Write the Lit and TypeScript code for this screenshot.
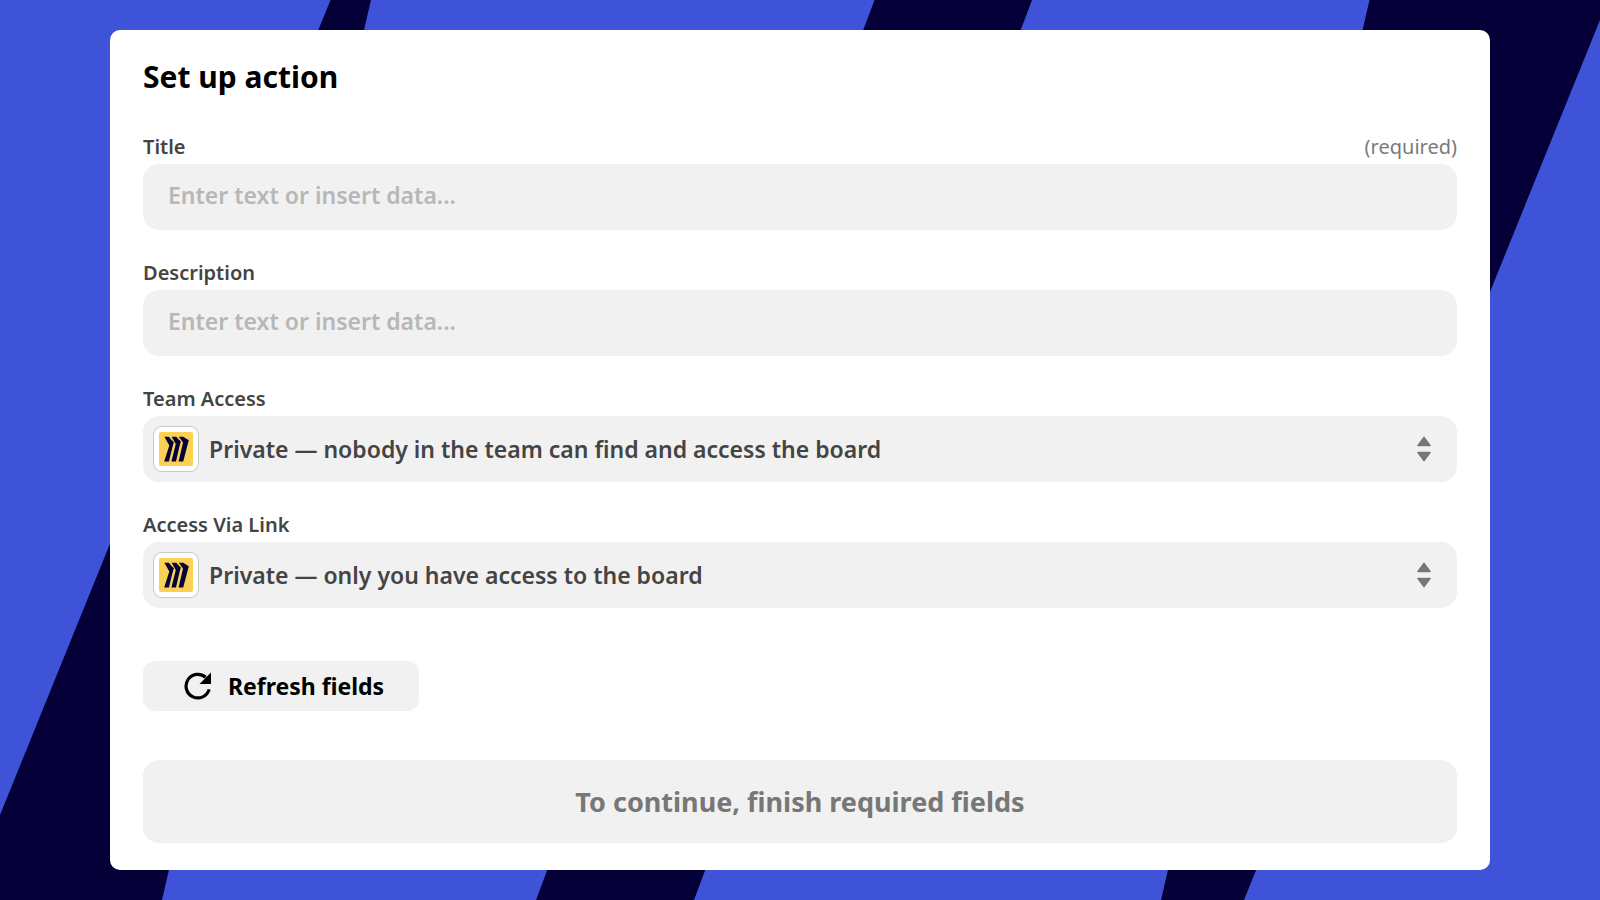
import { LitElement, html, css, svg } from "lit";
import { customElement, property } from "lit/decorators.js";

const appIcon = svg`
  <svg class="app-glyph" viewBox="0 0 34 34" aria-hidden="true">
    <rect width="34" height="34" rx="2" fill="#fad155"></rect>
    <g fill="#050038">
      <path d="M5.4 4.8H9.8L14.6 10.4L9.9 29.4H5.2L10.3 13.6Z"></path>
      <path d="M12.6 4.8H17.2L21.6 9.6L17 29.4H12.4L16.8 12Z"></path>
      <path d="M19.8 4.8H24.2L29.8 8.2L24.2 29.4H19.6L24 10.6Z"></path>
      <path d="M13.2 8.4L14.8 10.2L13 15ZM20.6 8.2L21.8 9.4L20 14Z"></path>
    </g>
  </svg>
`;

@customElement("form-field")
export class FormField extends LitElement {
  static styles = css`
    :host {
      display: block;
    }
    .head {
      display: flex;
      justify-content: space-between;
      font-size: 20px;
      line-height: 28px;
      padding-bottom: 3px;
    }
    .label {
      font-weight: 600;
      color: #444;
    }
    .required {
      color: #7a7a7a;
    }
    .text-input,
    .choice {
      box-sizing: border-box;
      width: 100%;
      height: 66px;
      border: 0;
      border-radius: 16px;
      background: #f1f1f1;
      font: inherit;
      font-size: 23px;
      font-weight: 600;
      color: #444;
    }
    .text-input {
      padding: 0 25px 4px;
    }
    .text-input::placeholder {
      color: #b7b7b7;
      opacity: 1;
    }
    .select-box {
      display: grid;
      grid-template-columns: auto 1fr auto;
      align-items: center;
    }
    .choice {
      grid-area: 1 / 1 / 2 / 4;
      appearance: none;
      padding: 0 60px 1px 66px;
      text-overflow: ellipsis;
    }
    .tile {
      grid-area: 1 / 1;
      box-sizing: border-box;
      display: grid;
      place-items: center;
      width: 46px;
      height: 46px;
      margin-left: 10px;
      border: 1px solid #c8c8c8;
      border-radius: 9px;
      background: #fff;
      pointer-events: none;
    }
    .app-glyph {
      display: block;
      width: 34px;
      height: 34px;
    }
    .arrows {
      grid-area: 1 / 3;
      width: 14px;
      height: 26px;
      margin-right: 26px;
      pointer-events: none;
    }
  `;

  @property() label = "";
  @property() placeholder = "";
  @property({ type: Boolean }) required = false;
  @property({ attribute: false }) options: string[] = [];

  render() {
    return html`
      <div class="head">
        <label class="label" for="control">${this.label}</label>
        ${this.required ? html`<span class="required">(required)</span>` : ""}
      </div>
      ${this.options.length ? this.renderSelect() : this.renderInput()}
    `;
  }

  private renderInput() {
    return html`<input
      class="text-input"
      id="control"
      type="text"
      placeholder=${this.placeholder}
      ?required=${this.required}
    />`;
  }

  private renderSelect() {
    return html`
      <div class="select-box">
        <select class="choice" id="control">
          ${this.options.map((o) => html`<option>${o}</option>`)}
        </select>
        <span class="tile">${appIcon}</span>
        <svg class="arrows" viewBox="0 0 14 26" aria-hidden="true">
          <g fill="#777" stroke="#777" stroke-width="1.6" stroke-linejoin="round">
            <path d="M7 1.4L13 9.4H1Z"></path>
            <path d="M7 24.6L13 16.6H1Z"></path>
          </g>
        </svg>
      </div>
    `;
  }
}

@customElement("app-root")
export class AppRoot extends LitElement {
  static styles = css`
    :host {
      display: grid;
      min-height: 100vh;
      background: #3f53d9;
      font-family: "Noto Sans", "Open Sans", sans-serif;
    }
    .backdrop {
      grid-area: 1 / 1;
      width: 100%;
      height: 100%;
      min-height: 0;
      contain: size;
    }
    .page {
      grid-area: 1 / 1;
      z-index: 1;
      padding: 30px 110px;
    }
    .card {
      display: flex;
      flex-direction: column;
      align-items: stretch;
      padding: 27px 33px;
      border-radius: 10px;
      background: #fff;
    }
    .heading {
      margin: 0 0 36px;
      font-size: 30px;
      line-height: 40px;
      font-weight: 700;
      color: #000;
    }
    .fields {
      display: grid;
      gap: 29px;
    }
    .button {
      border: 0;
      background: #f1f1f1;
      font: inherit;
      font-weight: 700;
    }
    .refresh {
      display: flex;
      align-items: center;
      align-self: flex-start;
      gap: 16px;
      height: 50px;
      margin: 53px 0 49px;
      padding: 0 35px 0 41px;
      border-radius: 12px;
      font-size: 23px;
      color: #000;
    }
    .refresh-icon {
      width: 28px;
      height: 28px;
    }
    .refresh-text {
      padding-bottom: 1px;
    }
    .submit {
      height: 83px;
      border-radius: 16px;
      font-size: 27px;
      color: #777;
    }
  `;

  render() {
    return html`
      <svg class="backdrop" viewBox="0 0 1600 900" preserveAspectRatio="none" aria-hidden="true">
        <g fill="#050038">
          <path d="M330.5 0H371L162 900H0V815Z"></path>
          <path d="M874.5 0H1032L694 900H536Z"></path>
          <path d="M1369.5 0H1600V20L1244 900H1161Z"></path>
        </g>
      </svg>
      <main class="page">
        <form class="card" @submit=${(e: Event) => e.preventDefault()}>
          <h1 class="heading">Set up action</h1>
          <div class="fields">
            <form-field label="Title" placeholder="Enter text or insert data..." required></form-field>
            <form-field label="Description" placeholder="Enter text or insert data..."></form-field>
            <form-field
              label="Team Access"
              .options=${["Private — nobody in the team can find and access the board"]}
            ></form-field>
            <form-field
              label="Access Via Link"
              .options=${["Private — only you have access to the board"]}
            ></form-field>
          </div>
          <button class="button refresh" type="button">
            <svg class="refresh-icon" viewBox="0 0 28 28" aria-hidden="true">
              <path
                d="M25.2 17.4A11.8 11.8 0 1 1 21.6 5.2"
                fill="none"
                stroke="#000"
                stroke-width="3.2"
              ></path>
              <path d="M27 0.5V12H15.5Z"></path>
            </svg>
            <span class="refresh-text">Refresh fields</span>
          </button>
          <button class="button submit" type="submit" disabled>
            To continue, finish required fields
          </button>
        </form>
      </main>
    `;
  }
}
